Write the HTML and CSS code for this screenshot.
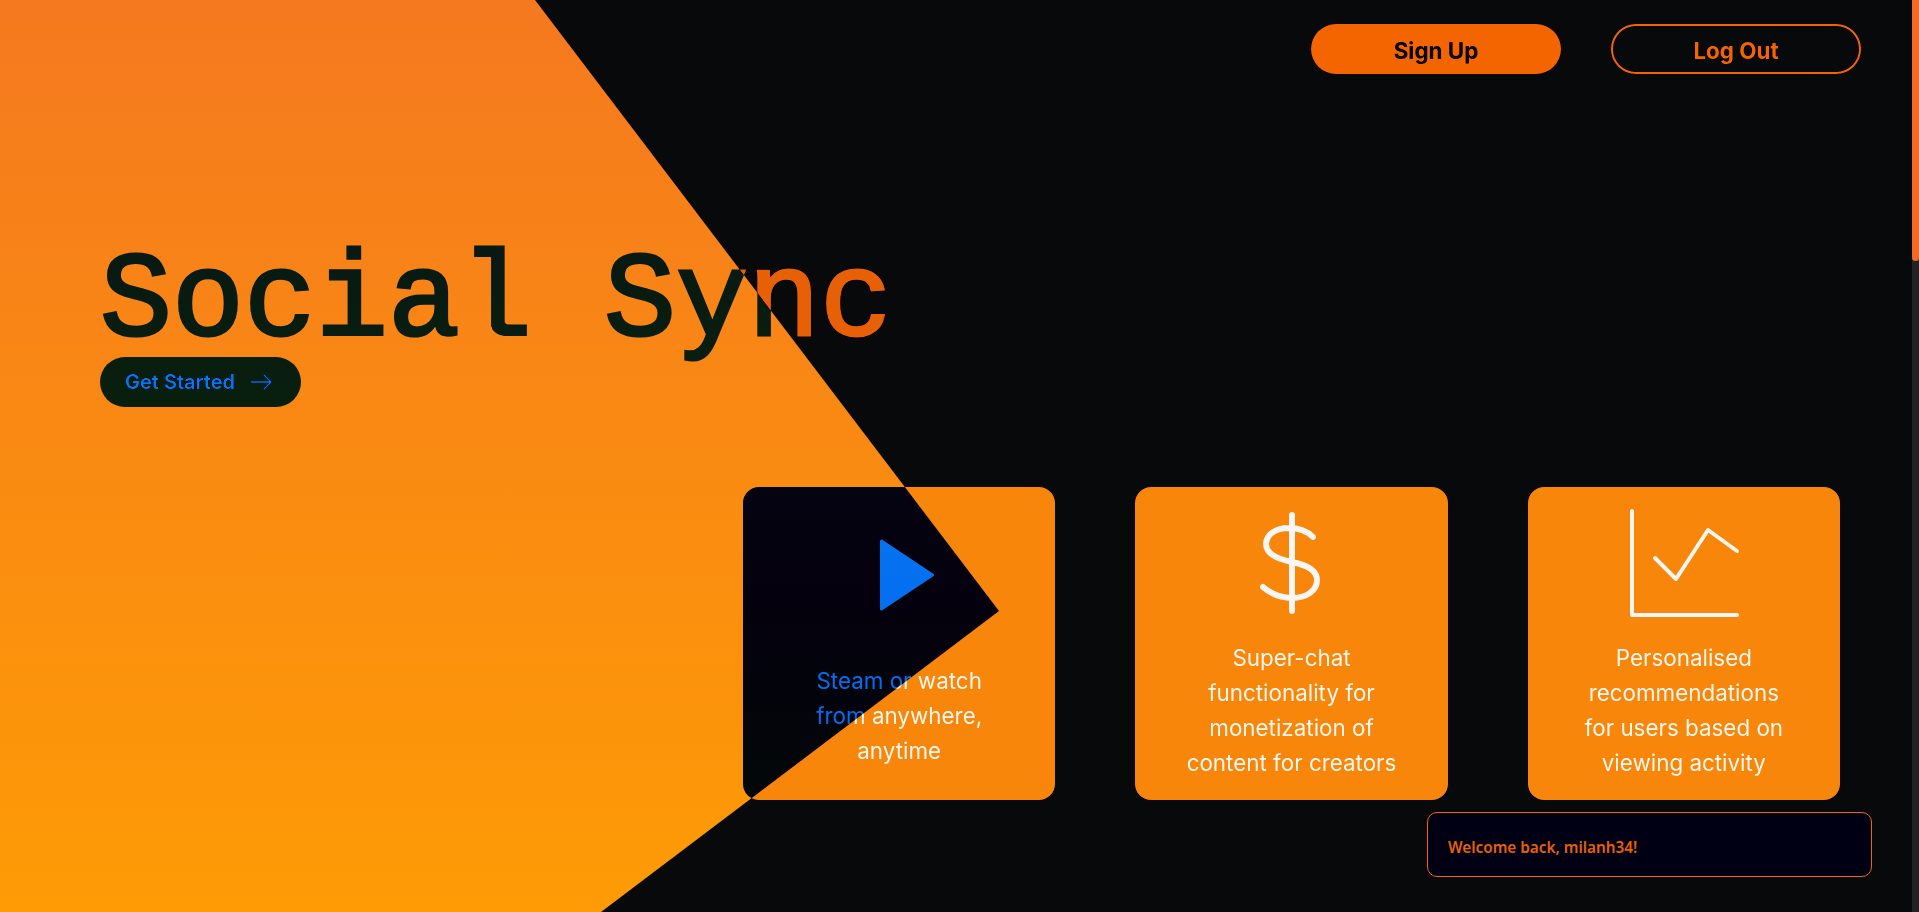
FILE: index.html
```html
<!DOCTYPE html>
<html lang="en">
<head>
<meta charset="utf-8">
<title>Social Sync</title>
<link rel="stylesheet" href="styles.css">
</head>
<body>
<div class="page">
  <section class="hero">
    <header class="topbar">
      <a class="btn btn-solid">Sign Up</a>
      <a class="btn btn-outline">Log Out</a>
    </header>
    <div class="intro">
      <h1 class="title">Social Sync</h1>
      <a class="cta">Get Started
        <svg class="cta-arrow" viewBox="0 0 24 24" fill="none" stroke="currentColor" stroke-width="1.400" stroke-linecap="round" stroke-linejoin="round"><path d="M2 12h20M15 5l7 7-7 7"/></svg>
      </a>
    </div>
    <div class="cards">
      <article class="card card-short">
        <svg class="card-icon" viewBox="0 0 120 120" fill="#fff" stroke="#fff" stroke-width="3" stroke-linejoin="round"><path d="M42.500 37.500V105.500L93.500 71.500Z" transform="translate(0 -11.500)"/></svg>
        <p class="card-text">Steam or watch from anywhere, anytime</p>
      </article>
      <article class="card">
        <svg class="card-icon" viewBox="0 0 120 120" fill="none" stroke="#fff" stroke-width="6" stroke-linecap="round"><path d="M60 12V108M81 34C75 28 66 25 57 25C43 25 34 32 34 41C34 51 45 56 60 59C75 62 85 68 85 77C85 88 74 95 60 95C49 95 39 91 31 84"/></svg>
        <p class="card-text">Super-chat functionality for monetization of content for creators</p>
      </article>
      <article class="card">
        <svg class="card-icon" viewBox="0 0 120 120" fill="none" stroke="#fff" stroke-width="4" stroke-linecap="round" stroke-linejoin="round"><path d="M8 8V112H113M31 55L52 76L84 27L113 48"/></svg>
        <p class="card-text">Personalised recommendations for users based on viewing activity</p>
      </article>
    </div>
  </section>
  <div class="blend"><div class="wedge"></div></div>
</div>
<div class="toast">Welcome back, milanh34!</div>
<div class="scrollbar"><div class="scrollbar-thumb"></div></div>
</body>
</html>
```
FILE: styles.css
```css
html { background: #000; }
body { margin: 0; font-family: Inter, "Noto Sans", sans-serif; color: #fff; }
.page { position: relative; overflow: hidden; }
.hero { height: 912px; display: flex; flex-direction: column; box-sizing: border-box; padding: 24px 58px 0 100px; }
.topbar { display: flex; justify-content: flex-end; gap: 50px; }
.btn { width: 250px; height: 50px; box-sizing: border-box; padding-top: 2px; display: flex; align-items: center; justify-content: center; border-radius: 25px; font-size: 22.400px; font-weight: 700; }
.btn-solid { background: #fc6e0b; color: #020202; }
.btn-outline { border: 2px solid #fc6e0b; color: #fc6e0b; }
.intro { margin-top: 176px; }
.title { margin: 0; font-family: "Liberation Mono", monospace; font-size: 120px; font-weight: 400; line-height: 107px; color: #f06906; -webkit-text-stroke: 3px #f06906; }
.cta { display: inline-flex; align-items: center; gap: 14px; height: 50px; padding: 0 28px 0 25px; background: #f06906; border-radius: 25px; font-size: 20px; font-weight: 600; }
.cta-arrow { width: 24px; height: 24px; }
.cards { display: flex; justify-content: flex-end; gap: 80px; margin-top: 80px; padding-right: 21px; }
.card { width: 312.330px; height: 313px; box-sizing: border-box; padding: 16px 48px 0; background: #ff8f00; border-radius: 16px; display: flex; flex-direction: column; align-items: center; gap: 16.500px; }
.card-short { padding-top: 27.500px; gap: 28.500px; }
.card-icon { width: 120px; height: 120px; flex: none; overflow: visible; }
.card-text { margin: 0; font-size: 22.400px; line-height: 35px; text-align: center; }
.blend { position: absolute; left: 0; top: 0; width: 100%; height: 912px; background: #08090b; mix-blend-mode: difference; pointer-events: none; }
.wedge { height: 100%; background: linear-gradient(#f5791f, #fe9b05); clip-path: polygon(0 0, 535px 0, 999px 611px, 601px 912px, 0 912px); }
.toast { position: fixed; left: 1427px; top: 812px; width: 445px; height: 65px; box-sizing: border-box; display: flex; align-items: center; padding: 4px 20px 0; background: #000014; border: 1px solid #f46500; border-radius: 10px; color: #e86005; font-family: "Noto Sans", sans-serif; font-size: 15.300px; font-weight: 600; }
.scrollbar { position: fixed; right: 0; top: 0; width: 7px; height: 912px; background: #222; }
.scrollbar-thumb { height: 261px; background: #f46a1f; border-radius: 0 0 4px 4px; }
```
